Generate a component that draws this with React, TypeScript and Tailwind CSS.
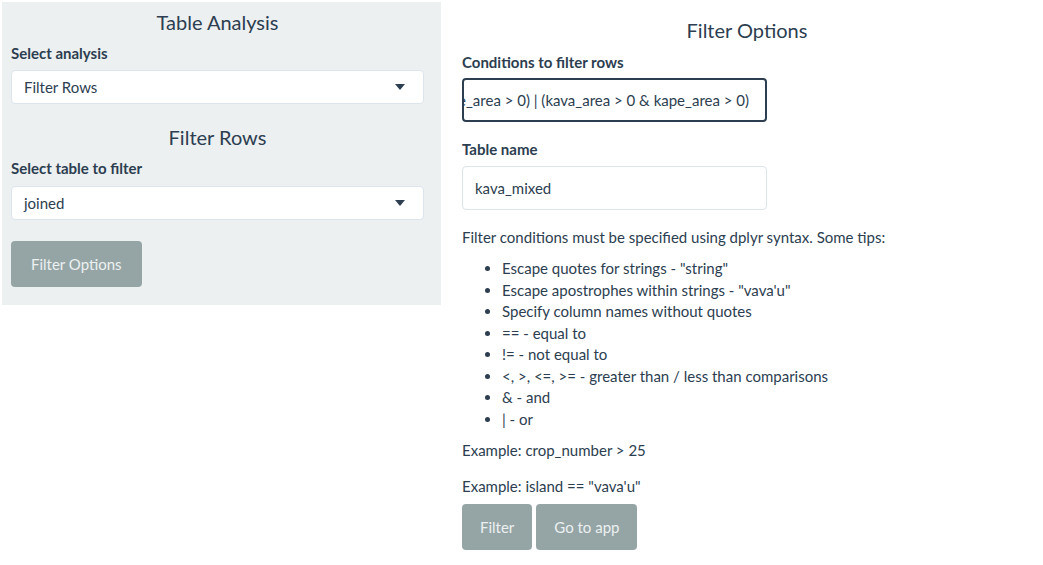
import { useState } from 'react'

const tips = [
  'Escape quotes for strings - "string"',
  'Escape apostrophes within strings - "vava\'u"',
  'Specify column names without quotes',
  '== - equal to',
  '!= - not equal to',
  '<, >, <=, >= - greater than / less than comparisons',
  '& - and',
  '| - or',
]

function Caret() {
  return (
    <svg width="10" height="6" viewBox="0 0 10 6" className="shrink-0">
      <path d="M0 0h10L5 6z" fill="#2c3e50" />
    </svg>
  )
}

function SelectBox({ value }: { value: string }) {
  return (
    <div className="flex h-[34px] items-center justify-between rounded-[4px] border border-[#dce4ec] bg-white pl-3 pr-[18px] text-[15px] text-[#2c3e50]">
      <span>{value}</span>
      <Caret />
    </div>
  )
}

function GreyButton({ children, wide }: { children: React.ReactNode; wide?: boolean }) {
  return (
    <button
      className={
        wide
          ? 'h-[46px] rounded-[4px] bg-[#95a5a6] px-[20px] text-[15px] text-[#ecf0f1]'
          : 'h-[46px] rounded-[4px] bg-[#95a5a6] px-[18px] text-[15px] text-[#ecf0f1]'
      }
    >
      {children}
    </button>
  )
}

export default function App() {
  const [condition] = useState('(kape_area > 0) | (kava_area > 0 & kape_area > 0)')
  const [tableName, setTableName] = useState('kava_mixed')

  return (
    <div className="flex min-h-[565px] items-start bg-white pt-[2px] pl-[2px] font-['Lato','Liberation_Sans',sans-serif] text-[#2c3e50]">
      {/* Sidebar */}
      <div className="flex w-[439px] flex-col bg-[#ecf0f1] pl-[9px] pr-[17px] pt-[8px] pb-[18px]">
        <h3 className="text-center text-[20px] leading-[24px]">Table Analysis</h3>
        <label className="mt-[9px] text-[15px] font-bold leading-[21px]">Select analysis</label>
        <div className="mt-[6px]">
          <SelectBox value="Filter Rows" />
        </div>
        <h3 className="mt-[21px] text-center text-[20px] leading-[24px]">Filter Rows</h3>
        <label className="mt-[9px] text-[15px] font-bold leading-[21px]">Select table to filter</label>
        <div className="mt-[7px]">
          <SelectBox value="joined" />
        </div>
        <div className="mt-[21px]">
          <GreyButton wide>Filter Options</GreyButton>
        </div>
      </div>

      {/* Main */}
      <div className="ml-[21px] flex w-[570px] flex-col pt-[16px] text-[15px]">
        <h4 className="text-center text-[20px] leading-[24px]">Filter Options</h4>
        <label className="mt-[10px] font-bold leading-[21px]">Conditions to filter rows</label>
        <div className="mt-[5px] flex h-[44px] w-[305px] items-center overflow-hidden rounded-[4px] border-2 border-[#2c3e50] bg-white pr-[16px]">
          <div className="flex w-full justify-end whitespace-nowrap">{condition}</div>
        </div>
        <label className="mt-[17px] font-bold leading-[21px]">Table name</label>
        <input
          value={tableName}
          onChange={(e) => setTableName(e.target.value)}
          className="mt-[6px] h-[44px] w-[305px] rounded-[4px] border border-[#dce4ec] bg-white px-[12px] text-[15px] text-[#2c3e50] outline-none"
        />
        <p className="mt-[17px] leading-[21px]">
          Filter conditions must be specified using dplyr syntax. Some tips:
        </p>
        <ul className="mt-[10px] list-disc pl-10 leading-[21.5px]">
          {tips.map((t) => (
            <li key={t}>{t}</li>
          ))}
        </ul>
        <p className="mt-[10px] leading-[21px]">Example: crop_number &gt; 25</p>
        <p className="mt-[15px] leading-[21px]">Example: island == "vava'u"</p>
        <div className="mt-[7px] flex gap-[4px]">
          <GreyButton>Filter</GreyButton>
          <GreyButton>Go to app</GreyButton>
        </div>
      </div>
    </div>
  )
}
